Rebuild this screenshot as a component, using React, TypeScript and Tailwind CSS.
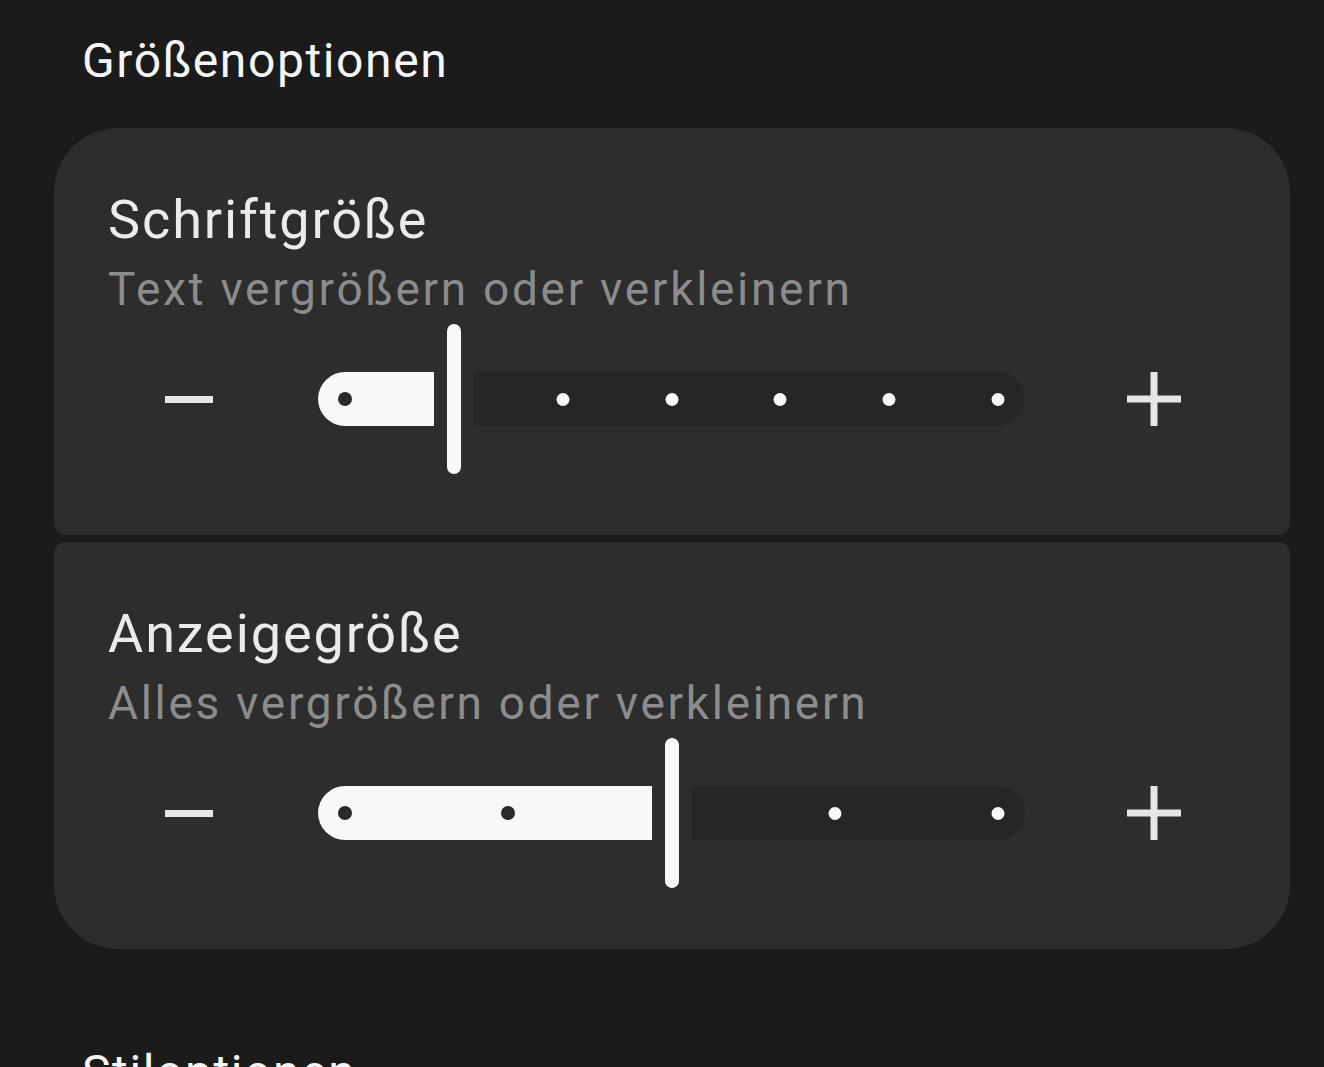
type SliderProps = {
  steps: number;
  value: number;
};

const TRACK_W = 707;
const KNOB = 27;

function Minus() {
  return (
    <div className="flex w-[96px] items-center justify-center">
      <div className="h-[7px] w-[48px] bg-[#e6e6e6]" />
    </div>
  );
}

function Plus() {
  return (
    <div className="flex w-[96px] items-center justify-center">
      <svg width="56" height="56" viewBox="0 0 56 56">
        <path d="M28 1v54M1 28h54" stroke="#e6e6e6" strokeWidth="7" />
      </svg>
    </div>
  );
}

function StepSlider({ steps, value }: SliderProps) {
  const span = (TRACK_W - KNOB * 2) / (steps - 1);
  const pos = KNOB + span * value;

  return (
    <div className="relative flex h-[150px] w-[707px] items-center">
      <div
        className="h-[54px] shrink-0 rounded-l-full rounded-r-[7px] bg-[#f8f8f8]"
        style={{ width: pos - 20 }}
      />
      <div className="ml-[13px] mr-[13px] h-[150px] w-[14px] shrink-0 rounded-full bg-[#f8f8f8]" />
      <div className="h-[54px] flex-1 rounded-l-[7px] rounded-r-full bg-[#262626]" />

      {/* step markers */}
      {Array.from({ length: steps }).map((_, i) =>
        i === value ? null : (
          <span
            key={i}
            className={
              i < value
                ? "absolute top-[68px] h-[14px] w-[14px] -translate-x-1/2 rounded-full bg-[#2a2a2a]"
                : "absolute top-[69px] h-[13px] w-[13px] -translate-x-1/2 rounded-full bg-[#f8f8f8]"
            }
            style={{ left: KNOB + span * i }}
          />
        )
      )}
    </div>
  );
}

function SizeCard({
  title,
  subtitle,
  steps,
  value,
  shape,
}: {
  title: string;
  subtitle: string;
  steps: number;
  value: number;
  shape: string;
}) {
  return (
    <div className={`bg-[#2d2d2d] pt-[58px] pb-[61px] ${shape}`}>
      <div className="pl-[54px]">
        <div className="text-[54px] leading-[68px] tracking-[1.9px] text-[#ebebeb]">{title}</div>
        <div className="text-[46px] leading-[70px] tracking-[2.7px] text-[#8c8c8c]">{subtitle}</div>
      </div>

      <div className="flex items-center gap-[81px] pl-[87px] pr-[88px]">
        <Minus />
        <StepSlider steps={steps} value={value} />
        <Plus />
      </div>
    </div>
  );
}

export default function App() {
  return (
    <div
      className="h-[1067px] overflow-hidden bg-[#1b1b1b] pl-[54px] pr-[34px] pt-[31px]"
      style={{ fontFamily: "Roboto, 'Noto Sans', sans-serif" }}
    >
      <h2 className="mb-[37px] pl-[28px] text-[48px] leading-[60px] tracking-[1.6px] text-[#f5f5f5]">
        Größenoptionen
      </h2>

      <div className="flex flex-col gap-[7px]">
        <SizeCard
          title="Schriftgröße"
          subtitle="Text vergrößern oder verkleinern"
          steps={7}
          value={1}
          shape="rounded-t-[64px] rounded-b-[12px]"
        />
        <SizeCard
          title="Anzeigegröße"
          subtitle="Alles vergrößern oder verkleinern"
          steps={5}
          value={2}
          shape="rounded-t-[12px] rounded-b-[64px]"
        />
      </div>

      <h2 className="mt-[94px] pl-[28px] text-[48px] leading-[60px] tracking-[1.6px] text-[#f5f5f5]">
        Stiloptionen
      </h2>
    </div>
  );
}
